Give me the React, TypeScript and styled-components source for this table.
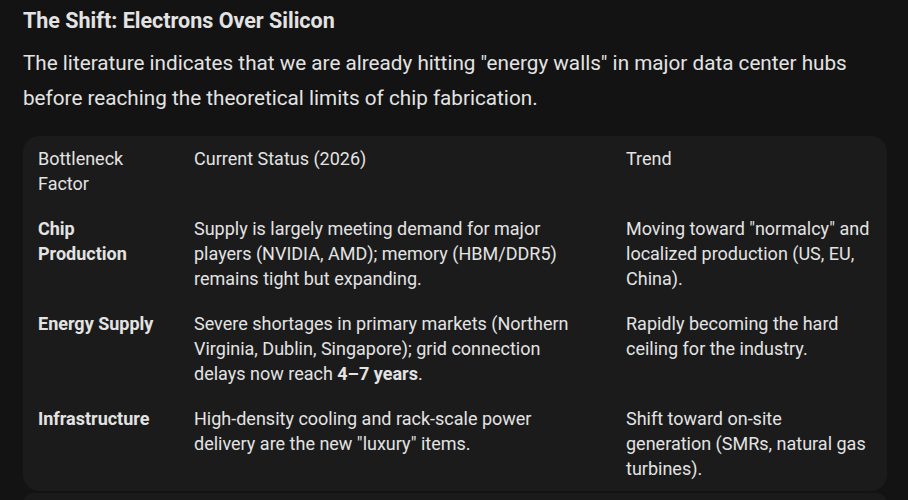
import React from "react"
import styled, { createGlobalStyle } from "styled-components"

const GlobalStyle = createGlobalStyle`
  html, body {
    margin: 0;
    padding: 0;
    background: #131313;
  }
  body {
    font-family: Roboto, "Liberation Sans", sans-serif;
    color: #e3e3e3;
    -webkit-font-smoothing: antialiased;
  }
`

const Page = styled.div`
  width: 908px;
  height: 500px;
  overflow: hidden;
  padding: 7px 21px 0 23px;
  box-sizing: border-box;
`

const Heading = styled.h3`
  margin: 0;
  font-size: 21.5px;
  line-height: 28px;
  font-weight: 700;
  color: #e3e3e3;
`

const Lead = styled.p`
  margin: 11px 0 20px;
  font-size: 20.7px;
  line-height: 35px;
  color: #e3e3e3;
`

const Card = styled.div`
  background: #1b1b1b;
  border-radius: 16px;
  width: 864px;
  overflow: hidden;
`

const Table = styled.table`
  width: 100%;
  border-collapse: collapse;
  table-layout: fixed;
  font-size: 18px;
  line-height: 25px;
`

const HeadCell = styled.th`
  text-align: left;
  font-weight: 400;
  vertical-align: top;
  padding: 10px 16px 10px 15px;
`

const Cell = styled.td<{ $strong?: boolean }>`
  vertical-align: top;
  padding: 10px 16px 10px 15px;
  font-weight: ${(p) => (p.$strong ? 700 : 400)};
`

const Below = styled.div`
  margin-top: 2px;
  width: 864px;
  height: 12px;
  background: #1a1a1a;
  border-radius: 10px 10px 0 0;
`

type Row = { factor: string; status: React.ReactNode; trend: string }

const rows: Row[] = [
  {
    factor: "Chip Production",
    status: "Supply is largely meeting demand for major players (NVIDIA, AMD); memory (HBM/DDR5) remains tight but expanding.",
    trend: "Moving toward \"normalcy\" and localized production (US, EU, China).",
  },
  {
    factor: "Energy Supply",
    status: (
      <>
        Severe shortages in primary markets (Northern Virginia, Dublin, Singapore); grid connection delays now reach{" "}
        <b>4–7 years</b>.
      </>
    ),
    trend: "Rapidly becoming the hard ceiling for the industry.",
  },
  {
    factor: "Infrastructure",
    status: "High-density cooling and rack-scale power delivery are the new \"luxury\" items.",
    trend: "Shift toward on-site generation (SMRs, natural gas turbines).",
  },
]

export default function App() {
  return (
    <Page>
      <GlobalStyle />
      <Heading>The Shift: Electrons Over Silicon</Heading>
      <Lead>
        The literature indicates that we are already hitting "energy walls" in major data center hubs before reaching
        the theoretical limits of chip fabrication.
      </Lead>
      <Card>
        <Table>
          <colgroup>
            <col style={{ width: 156 }} />
            <col style={{ width: 432 }} />
            <col />
          </colgroup>
          <thead>
            <tr>
              <HeadCell>Bottleneck Factor</HeadCell>
              <HeadCell>Current Status (2026)</HeadCell>
              <HeadCell>Trend</HeadCell>
            </tr>
          </thead>
          <tbody>
            {rows.map((r) => (
              <tr key={r.factor}>
                <Cell $strong>{r.factor}</Cell>
                <Cell>{r.status}</Cell>
                <Cell>{r.trend}</Cell>
              </tr>
            ))}
          </tbody>
        </Table>
      </Card>
      <Below />
    </Page>
  )
}
